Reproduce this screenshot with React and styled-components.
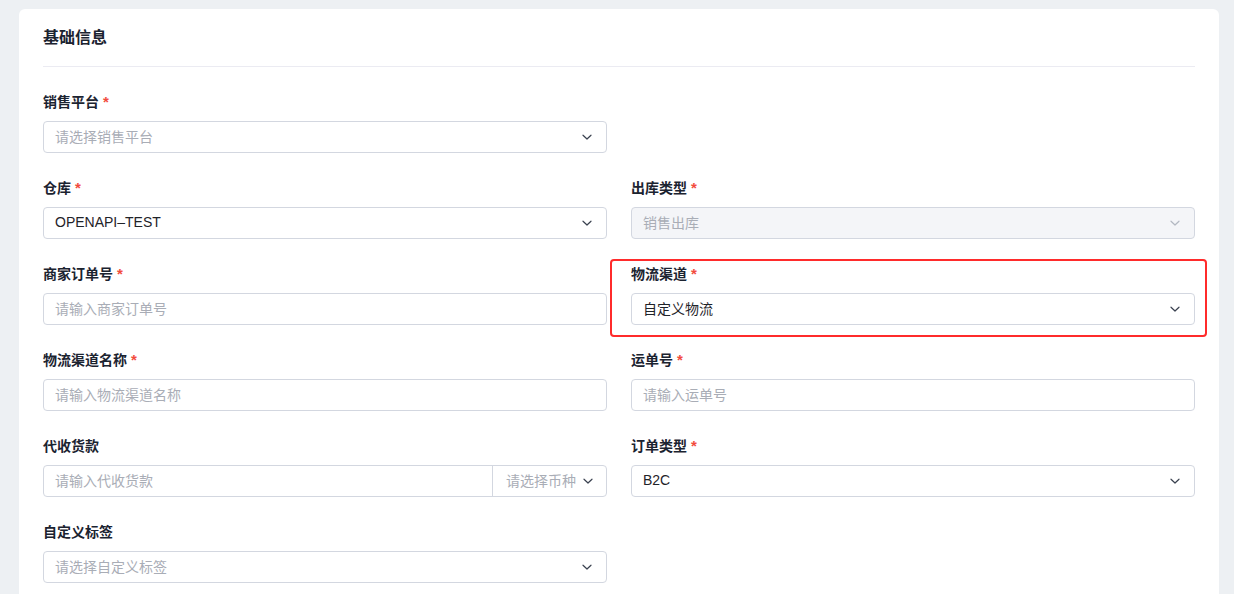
import React from "react";
import styled, { createGlobalStyle } from "styled-components";

const Global = createGlobalStyle`
  html, body { margin: 0; padding: 0; background: #edf0f3; }
  body { font-family: "Liberation Sans", "Noto Sans CJK SC", sans-serif; -webkit-font-smoothing: antialiased; }
  * { box-sizing: border-box; }
`;

const Page = styled.div`
  padding: 9px 15px 0 19px;
  height: 594px;
  overflow: hidden;
`;

const Card = styled.div`
  background: #fff;
  border-radius: 6px;
  padding: 0 24px;
  min-height: 620px;
`;

const Header = styled.div`
  height: 58px;
  padding-bottom: 3px;
  display: flex;
  align-items: center;
  border-bottom: 1px solid #ebebf2;
  font-size: 16px;
  font-weight: 600;
  color: #1b2330;
`;

const Form = styled.div`
  padding-top: 24px;
  display: grid;
  grid-template-columns: 1fr 1fr;
  column-gap: 24px;
`;

const Item = styled.div`
  position: relative;
  display: flex;
  flex-direction: column;
  margin-bottom: 24px;
  grid-column: ${(p) => p.$col || "auto"};
`;

const Label = styled.div`
  height: 22px;
  line-height: 22px;
  font-size: 14px;
  font-weight: 600;
  color: #1b2330;
  margin-bottom: 8px;
`;

const Star = styled.span`
  color: #f24c3d;
  margin-left: 4px;
  font-weight: 600;
  font-size: 15px;
`;

const Field = styled.div`
  height: 32px;
  display: flex;
  align-items: center;
  border: 1px solid #d3d7e0;
  border-radius: 4px;
  background: ${(p) => (p.$disabled ? "#f4f5f8" : "#fff")};
  font-size: 14px;
  overflow: hidden;
`;

const Text = styled.div`
  flex: 1;
  padding-left: 11px;
  padding-bottom: 2px;
  color: ${(p) => (p.$placeholder ? "#a9adb6" : "#1f2329")};
  white-space: nowrap;
`;

const Chevron = styled.svg`
  width: 12px;
  height: 12px;
  margin-right: 13px;
  flex-shrink: 0;
  color: ${(p) => (p.$disabled ? "#b3b8c2" : "#3b4250")};
`;

const Addon = styled.div`
  width: 114px;
  height: 100%;
  display: flex;
  align-items: center;
  border-left: 1px solid #d3d7e0;
  padding-left: 13px;
  padding-bottom: 2px;
  color: #a9adb6;
  white-space: nowrap;
  gap: 6px;
  & > svg { margin-right: 0; margin-top: 2px; }
`;

const Highlight = styled.div`
  position: absolute;
  left: -21px;
  right: -12px;
  top: -4px;
  bottom: -12px;
  border: 2px solid #ff2b2b;
  border-radius: 4px;
  pointer-events: none;
`;

const Arrow = ({ disabled }) => (
  <Chevron $disabled={disabled} viewBox="0 0 12 12" fill="none">
    <path d="M2 4.2 L6 8 L10 4.2" stroke="currentColor" strokeWidth="1.2" strokeLinecap="round" strokeLinejoin="round" />
  </Chevron>
);

const SelectField = ({ value, placeholder, disabled }) => (
  <Field $disabled={disabled}>
    <Text $placeholder={!value || disabled}>{value || placeholder}</Text>
    <Arrow disabled={disabled} />
  </Field>
);

const InputField = ({ placeholder }) => (
  <Field>
    <Text $placeholder>{placeholder}</Text>
  </Field>
);

const FormItem = ({ label, required, children, col, highlight }) => (
  <Item $col={col}>
    <Label>
      {label}
      {required && <Star>*</Star>}
    </Label>
    {children}
    {highlight && <Highlight />}
  </Item>
);

export default function App() {
  return (
    <>
      <Global />
      <Page>
        <Card>
          <Header>基础信息</Header>
          <Form>
            <FormItem label="销售平台" required col="1">
              <SelectField placeholder="请选择销售平台" />
            </FormItem>
            <FormItem label="仓库" required col="1">
              <SelectField value="OPENAPI–TEST" />
            </FormItem>
            <FormItem label="出库类型" required>
              <SelectField value="销售出库" disabled />
            </FormItem>
            <FormItem label="商家订单号" required>
              <InputField placeholder="请输入商家订单号" />
            </FormItem>
            <FormItem label="物流渠道" required highlight>
              <SelectField value="自定义物流" />
            </FormItem>
            <FormItem label="物流渠道名称" required>
              <InputField placeholder="请输入物流渠道名称" />
            </FormItem>
            <FormItem label="运单号" required>
              <InputField placeholder="请输入运单号" />
            </FormItem>
            <FormItem label="代收货款">
              <Field>
                <Text $placeholder>请输入代收货款</Text>
                <Addon>
                  请选择币种
                  <Arrow />
                </Addon>
              </Field>
            </FormItem>
            <FormItem label="订单类型" required>
              <SelectField value="B2C" />
            </FormItem>
            <FormItem label="自定义标签" col="1">
              <SelectField placeholder="请选择自定义标签" />
            </FormItem>
          </Form>
        </Card>
      </Page>
    </>
  );
}
